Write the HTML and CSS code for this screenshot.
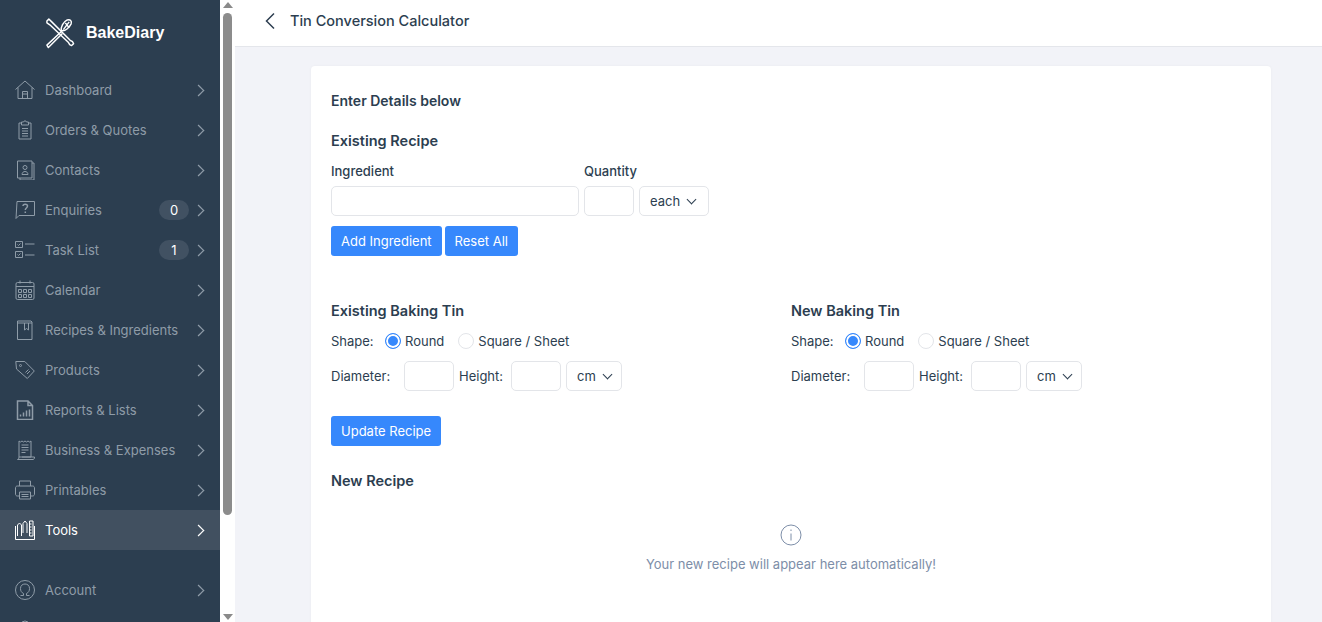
FILE: index.html
```html
<!DOCTYPE html>
<html lang="en">
<head>
    <meta charset="UTF-8">
    <title>Tin Conversion Calculator</title>
    <link rel="stylesheet" href="styles.css">
</head>
<body>
    <aside class="sidebar">
        <div class="logo">
            <svg class="logo-icon" viewBox="0 0 32 32" fill="none" stroke="#fff" stroke-width="1.5" stroke-linejoin="round">
                <path d="M3 3l2-2 3 3 19 19 2.500 1.500 1 2-2 2-2-1-1.500-2.500L6 7 3 5z"/>
                <path d="M18 14l-15 14 1.500 2.500L19 16"/>
                <path d="M18 13c-1-4 2-9 6-11 3-1 5 1 4 4-2 4-6 8-10 7z"/>
                <path d="M20 12l6-8M22 5l4 5"/>
            </svg>
            <span>BakeDiary</span>
        </div>
        <nav class="nav">
            <a class="nav-item">
                <svg class="nav-icon" viewBox="0 0 20 20"><path d="M.5 9.500L10 1l9.500 8.500M3 7.500V18.500h14V7.500M7.500 18.500v-7h5v7M7.500 14h5"/></svg>
                <span class="nav-label">Dashboard</span><span class="chev"></span>
            </a>
            <a class="nav-item">
                <svg class="nav-icon" viewBox="0 0 20 20"><path d="M6.500 3h-2.500v16h12V3h-2.500M6.500 2h2c0-1.500 3-1.500 3 0h2v3h-7zM7 8.500h6M7 11h6M7 13.500h6M7 16h6"/></svg>
                <span class="nav-label">Orders &amp; Quotes</span><span class="chev"></span>
            </a>
            <a class="nav-item">
                <svg class="nav-icon" viewBox="0 0 20 20"><path d="M2.500 1h14.500v17H2.500zM17 3h2v17H5v-2M7 14.500c0-4 6-4 6 0zM12 7.500a2 2 0 1 1-4 0 2 2 0 0 1 4 0z"/></svg>
                <span class="nav-label">Contacts</span><span class="chev"></span>
            </a>
            <a class="nav-item">
                <svg class="nav-icon" viewBox="0 0 20 20"><path d="M2 1.500h17.500v14H4l-3 3z"/><path d="M8 6c0-2.500 4.500-2.500 4.500 0 0 2-2.200 2-2.200 4M10.300 11.500v1.500" stroke-width="1.500"/></svg>
                <span class="nav-label">Enquiries</span><span class="badge">0</span><span class="chev"></span>
            </a>
            <a class="nav-item">
                <svg class="nav-icon" viewBox="0 0 20 20"><path d="M.5 1.500h7v6h-7zM.5 11.500h7v6h-7zM2.500 4.500l1 1 2-2M2.500 14.500l1 1 2-2M10 4h9.500M10 15h9.500"/></svg>
                <span class="nav-label">Task List</span><span class="badge">1</span><span class="chev"></span>
            </a>
            <a class="nav-item">
                <svg class="nav-icon" viewBox="0 0 20 20"><rect x="1" y="2.500" width="18" height="17" rx="1.500"/><path d="M1 6.500h18M5 .5v3M15 .5v3M3.500 9.500h3v3h-3zM8.500 9.500h3v3h-3zM13.500 9.500h3v3h-3zM3.500 14.500h3v3h-3zM8.500 14.500h3v3h-3zM13.500 14.500h3v3h-3z"/></svg>
                <span class="nav-label">Calendar</span><span class="chev"></span>
            </a>
            <a class="nav-item">
                <svg class="nav-icon" viewBox="0 0 20 20"><path d="M2.500 19.500V1h13.500l1 1v17.500zM2.500 3h14.500M9.500 3v7l2-1.500 2 1.500V3"/></svg>
                <span class="nav-label">Recipes &amp; Ingredients</span><span class="chev"></span>
            </a>
            <a class="nav-item">
                <svg class="nav-icon" viewBox="0 0 20 20"><path d="M.8 1.500h9l9.500 9.500-7 7.500L1.500 9zM4.500 5.500a1 1 0 1 0 2 0 1 1 0 0 0-2 0zM10.500 12.500l3-3M12 14l3-3"/></svg>
                <span class="nav-label">Products</span><span class="chev"></span>
            </a>
            <a class="nav-item">
                <svg class="nav-icon" viewBox="0 0 20 20"><path d="M2.500 1h10.500l4.500 4.500V19.500H2.500zM13 1v4.500h4.500M5.500 16.500v-2M8.500 16.500v-4M11.500 16.500v-6M14.500 16.500v-7" stroke-width="1.500"/></svg>
                <span class="nav-label">Reports &amp; Lists</span><span class="chev"></span>
            </a>
            <a class="nav-item">
                <svg class="nav-icon" viewBox="0 0 20 20"><path d="M4 1l1.500 1L7 1l1.500 1L10 1l1.500 1L13 1l1.500 1L16 1v16H4zM6.500 5h7M6.500 7.500h7M6.500 10h7M6.500 12.500h4M4 17c0 2-1 2.500-1.500 2.500H18c1 0 1.500-1 1.500-2.500H7"/></svg>
                <span class="nav-label">Business &amp; Expenses</span><span class="chev"></span>
            </a>
            <a class="nav-item">
                <svg class="nav-icon" viewBox="0 0 20 20"><path d="M4.500 6V1h11v5M4.500 16H2.500C1 16 .5 15 .5 14V8c0-1 .5-2 2-2h15c1.500 0 2 1 2 2v6c0 1-.5 2-2 2h-2M4.500 12h11v7h-11zM6.500 14.500h7M6.500 16.500h7"/></svg>
                <span class="nav-label">Printables</span><span class="chev"></span>
            </a>
            <a class="nav-item active">
                <svg class="nav-icon" viewBox="0 0 20 20"><path d="M2.500 8V5l2-2 2 2v9M8 13V3.500l2-2.500 2 2.500V13M14.500 1h3.500v15h-3.500zM14.500 4h2M14.500 7h2M14.500 10h2M14.500 13h2M.5 6v13.500h19V6M2.500 16V8M6.500 16v-3"/></svg>
                <span class="nav-label">Tools</span><span class="chev"></span>
            </a>
            <a class="nav-item nav-gap">
                <svg class="nav-icon" viewBox="0 0 20 20"><circle cx="10" cy="10" r="9.500"/><path d="M5.500 15.500h3v-2c-2-1-3-2.500-3-5 0-3 2-4.500 4.500-4.500s4.500 1.500 4.500 4.500c0 2.500-1 4-3 5v2h3"/></svg>
                <span class="nav-label">Account</span><span class="chev"></span>
            </a>
            <a class="nav-item">
                <svg class="nav-icon" viewBox="0 0 20 20"><circle cx="10" cy="5" r="4"/><path d="M2 19c0-10 16-10 16 0"/></svg>
                <span class="nav-label">Logout</span>
            </a>
        </nav>
    </aside>

    <div class="scrollbar">
        <span class="arrow-up"></span>
        <div class="scroll-track"><div class="scroll-thumb"></div></div>
        <span class="arrow-down"></span>
    </div>

    <div class="page">
        <header class="topbar">
            <svg class="back" viewBox="0 0 12 18" fill="none" stroke="#2c3e50" stroke-width="1.500"><path d="M10 1.500L2.500 9l7.500 7.500"/></svg>
            <h1>Tin Conversion Calculator</h1>
        </header>
        <main class="content">
            <section class="card">
                <h2 class="details-title">Enter Details below</h2>
                <h3 class="section-title">Existing Recipe</h3>
                <div class="ingredient-labels">
                    <label class="ingredient-label">Ingredient</label>
                    <label>Quantity</label>
                </div>
                <div class="row">
                    <input class="field field-wide" type="text">
                    <input class="field field-small" type="text">
                    <div class="select select-each">each<span class="caret"></span></div>
                </div>
                <div class="buttons">
                    <button class="btn">Add Ingredient</button>
                    <button class="btn">Reset All</button>
                </div>

                <div class="tins">
                    <div class="tin">
                        <h3 class="section-title">Existing Baking Tin</h3>
                        <div class="shape-row">
                            <span class="shape-label">Shape:</span>
                            <span class="radio checked"></span><span class="radio-text">Round</span>
                            <span class="radio"></span><span>Square / Sheet</span>
                        </div>
                        <div class="row">
                            <span class="dim-label">Diameter:</span>
                            <input class="field field-small" type="text">
                            <span class="height-label">Height:</span>
                            <input class="field field-small" type="text">
                            <div class="select select-unit">cm<span class="caret"></span></div>
                        </div>
                    </div>
                    <div class="tin">
                        <h3 class="section-title">New Baking Tin</h3>
                        <div class="shape-row">
                            <span class="shape-label">Shape:</span>
                            <span class="radio checked"></span><span class="radio-text">Round</span>
                            <span class="radio"></span><span>Square / Sheet</span>
                        </div>
                        <div class="row">
                            <span class="dim-label">Diameter:</span>
                            <input class="field field-small" type="text">
                            <span class="height-label">Height:</span>
                            <input class="field field-small" type="text">
                            <div class="select select-unit">cm<span class="caret"></span></div>
                        </div>
                    </div>
                </div>

                <button class="btn btn-update">Update Recipe</button>
                <h3 class="section-title new-recipe">New Recipe</h3>
                <div class="empty">
                    <svg class="info" viewBox="0 0 22 22" fill="none" stroke="#7d8ea8"><circle cx="11" cy="11" r="10"/><path d="M11 9.500v7M11 5.500v1.500"/></svg>
                    <p>Your new recipe will appear here automatically!</p>
                </div>
            </section>
        </main>
    </div>
</body>
</html>
```

FILE: styles.css
```css
* {
    box-sizing: border-box;
}
html, body {
    height: 100%;
}
body {
    margin: 0;
    display: flex;
    overflow: hidden;
    font-family: Inter, "Liberation Sans", sans-serif;
    font-size: 13px;
    color: #2c3e50;
    background-color: #fff;
}
h1, h2, h3, p {
    margin: 0;
}

/* sidebar */
.sidebar {
    flex: 0 0 220px;
    height: 100%;
    overflow: hidden;
    background-color: #2c3e50;
}
.logo {
    height: 70px;
    display: flex;
    align-items: center;
    padding: 0 0 4px 44px;
    color: #fff;
    font-family: "Liberation Sans", sans-serif;
    font-size: 16px;
    font-weight: 700;
}
.logo-icon {
    width: 31px;
    height: 31px;
    margin-right: 11px;
}
.nav-item {
    height: 40px;
    display: flex;
    align-items: center;
    padding: 0 15px;
    color: #8f9ca8;
    font-size: 13px;
}
.nav-icon {
    width: 20px;
    height: 20px;
    margin-right: 10px;
    flex: none;
    fill: none;
    stroke: #8f9ca8;
    stroke-width: 1;
}
.nav-label {
    flex: 1;
}
.badge {
    width: 30px;
    height: 20px;
    margin-right: 6px;
    border-radius: 10px;
    background-color: #415162;
    color: #fff;
    font-size: 13px;
    line-height: 20px;
    text-align: center;
}
.chev {
    width: 7px;
    height: 7px;
    margin-right: 3px;
    border-top: 1px solid #8f9ca8;
    border-right: 1px solid #8f9ca8;
    transform: rotate(45deg) scale(1.2);
}
.active {
    background-color: #415060;
    color: #fff;
}
.active .nav-icon {
    stroke: #fff;
}
.active .chev {
    border-color: #fff;
    border-width: 1.5px;
}
.nav-gap {
    margin-top: 20px;
}

/* fake browser scrollbar */
.scrollbar {
    flex: 0 0 15px;
    height: 100%;
    display: flex;
    flex-direction: column;
    align-items: center;
    background-color: #fff;
}
.arrow-up, .arrow-down {
    flex: none;
    width: 0;
    height: 0;
    border-left: 5px solid transparent;
    border-right: 5px solid transparent;
}
.arrow-up {
    margin-top: 2px;
    border-bottom: 6px solid #8a8a8a;
}
.arrow-down {
    margin-bottom: 2px;
    border-top: 6px solid #8a8a8a;
}
.scroll-track {
    flex: 1;
    width: 9px;
    padding-top: 5px;
}
.scroll-thumb {
    height: 502px;
    border-radius: 5px;
    background-color: #8c8c8c;
}

/* main area */
.page {
    flex: 1;
    min-width: 0;
    height: 100%;
    overflow: hidden;
    background-color: #f2f3f8;
}
.topbar {
    height: 47px;
    display: flex;
    align-items: center;
    padding: 0 0 5px 29px;
    background-color: #fff;
    border-bottom: 1px solid #e4e6eb;
}
.back {
    width: 12px;
    height: 18px;
    margin-right: 14px;
}
.topbar h1 {
    font-size: 14.5px;
    font-weight: 500;
}
.content {
    padding: 19px 51px 0 76px;
}
.card {
    height: 600px;
    padding: 25px 20px;
    background-color: #fff;
    border-radius: 4px;
    box-shadow: 0 0 3px rgba(0, 0, 0, 0.04);
}
.details-title {
    font-size: 14px;
    font-weight: 600;
    line-height: 20px;
}
.section-title {
    font-size: 14.5px;
    font-weight: 600;
    line-height: 20px;
}
.details-title + .section-title {
    margin-top: 20px;
}
.ingredient-labels {
    display: flex;
    margin-top: 10px;
    font-size: 13px;
    font-weight: 500;
    line-height: 20px;
}
.ingredient-label {
    width: 253px;
}
.row {
    display: flex;
    align-items: center;
    gap: 5px;
    margin-top: 5px;
}
.field {
    height: 30px;
    padding: 0 8px;
    border: 1px solid #e3e5e9;
    border-radius: 5px;
    background-color: #fff;
}
.field-wide {
    width: 248px;
}
.field-small {
    width: 50px;
}
.select {
    height: 30px;
    display: flex;
    align-items: center;
    padding-left: 10px;
    border: 1px solid #e3e5e9;
    border-radius: 5px;
    font-size: 13px;
}
.select-each {
    width: 70px;
}
.select-unit {
    width: 56px;
}
.caret {
    width: 7px;
    height: 7px;
    margin: -4px 0 0 8px;
    border-right: 1px solid #2c3e50;
    border-bottom: 1px solid #2c3e50;
    transform: rotate(45deg);
}
.buttons {
    display: flex;
    gap: 3px;
    margin-top: 10px;
}
.btn {
    height: 30px;
    padding: 0 10px;
    border: none;
    border-radius: 3px;
    background-color: #3688fc;
    color: #fff;
    font-family: inherit;
    font-size: 13px;
}
.tins {
    display: flex;
    margin-top: 45px;
}
.tin {
    flex: 0 0 460px;
}
.shape-row {
    display: flex;
    align-items: center;
    height: 20px;
    margin-top: 10px;
}
.shape-label {
    width: 54px;
}
.radio {
    width: 16px;
    height: 16px;
    margin-right: 4px;
    border: 1px solid #e3e5e9;
    border-radius: 50%;
}
.radio.checked {
    border: 1px solid #3688fc;
    background-color: #3688fc;
    box-shadow: inset 0 0 0 2px #fff;
}
.radio-text {
    margin-right: 14px;
}
.tin .row {
    margin-top: 10px;
}
.dim-label {
    width: 68px;
}
.height-label {
    width: 45px;
}
.tin .row .height-label {
    margin-right: 2px;
}
.btn-update {
    display: block;
    margin-top: 25px;
}
.new-recipe {
    margin-top: 25px;
}
.empty {
    margin-top: 33px;
    text-align: center;
    color: #7d8ea8;
}
.info {
    display: block;
    width: 22px;
    height: 22px;
    margin: 0 auto 10px;
}
```
